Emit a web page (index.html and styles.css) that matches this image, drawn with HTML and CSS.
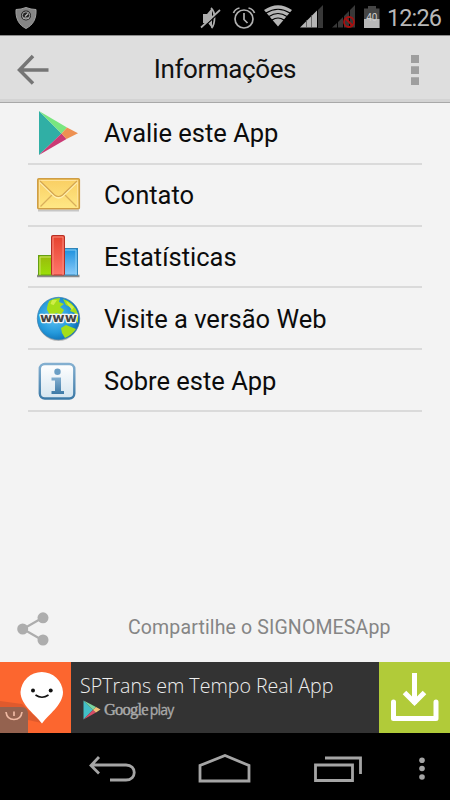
FILE: index.html
```
<!DOCTYPE html>
<html lang="pt-BR">
<head>
    <meta charset="utf-8">
    <meta name="viewport" content="width=device-width, initial-scale=1.0">
    <title>Informações</title>
    <link rel="stylesheet" href="styles.css">
</head>
<body>

<!-- Status bar -->
<div class="status-bar">
    <svg class="shield" width="22" height="22" viewBox="0 0 22 22">
        <path d="M1 2.5Q6 2.5 11 .5Q16 2.5 21 2.5C21.500 12 18 18 11 21.500C4 18 .5 12 1 2.500Z" fill="#858585" stroke="#a0a0a0"/>
        <circle cx="11" cy="8.500" r="5" fill="#222"/>
        <circle cx="11" cy="8.500" r="3.700" fill="none" stroke="#aaa"/>
        <path d="M10 9.500L13 6.500M8 11H14" stroke="#bbb" stroke-width="1.200"/>
    </svg>
    <svg class="mute" width="22" height="24" viewBox="0 0 22 24">
        <path d="M3 8H7L12 2V22L8 17H3Z" fill="#adadad"/>
        <path d="M11 2Q14.500 5 14.500 12T11.500 22" fill="none" stroke="#adadad" stroke-width="1.800"/>
        <path d="M2 22.500L21 5" stroke="#000" stroke-width="1.500"/>
        <path d="M1 21.500L20 4" stroke="#adadad" stroke-width="1.700"/>
    </svg>
    <svg class="alarm" width="24" height="24" viewBox="0 0 24 24">
        <g fill="none" stroke="#b0b0b0" stroke-width="1.700">
            <circle cx="12" cy="13" r="9"/>
            <path d="M12 7V13.500L15.500 17M1.500 7Q3 3 7.500 2M22.500 7Q21 3 16.500 2"/>
        </g>
    </svg>
    <svg class="wifi" width="28" height="22" viewBox="0 0 28 22">
        <path d="M0 5Q14-4.500 28 5L14 21.500Z" fill="#b5b5b5"/>
        <path d="M2 8Q14 .5 26 8M5 11.500Q14 5.500 23 11.500M8 15Q14 11 20 15" fill="none" stroke="#000" stroke-width="1.200"/>
    </svg>
    <svg class="signal" width="24" height="24" viewBox="0 0 24 24">
        <path d="M18 6L23 1V24H18Z" fill="#383838"/>
        <path d="M0 23.500L17 6.500V23.500Z" fill="#b5b5b5"/>
        <path d="M6.500 16V24M11.500 11V24" stroke="#555" stroke-width=".8"/>
    </svg>
    <svg class="signal-off" width="24" height="24" viewBox="0 0 24 24">
        <path d="M0 23.500L5 19V23.500ZM6 18L11 13V23.500H6ZM12 12L17 7V23.500H12ZM18 6L23 1V23.500H18Z" fill="#383838"/>
        <g fill="none" stroke="#a90f0f" stroke-width="1.800">
            <circle cx="17" cy="18" r="5"/>
            <path d="M13.500 14.500L20.500 21.500"/>
        </g>
    </svg>
    <svg class="battery" width="16" height="22" viewBox="0 0 16 22">
        <path d="M0 2.500H4V0H12V2.500H15.500V22H0Z" fill="#454545"/>
        <path d="M0 13H15.500V22H0Z" fill="#b8b8b8"/>
        <text x="7.800" y="14.500" text-anchor="middle">40</text>
    </svg>
    <span class="clock">12:26</span>
</div>

<!-- Title bar -->
<header class="title-bar">
    <svg width="34" height="32" viewBox="0 0 34 32">
        <path d="M17 2L3.500 16L17 29.500M3 16H32.500" fill="none" stroke="#757575" stroke-width="3.500"/>
    </svg>
    <h1>Informações</h1>
    <svg width="8" height="30" viewBox="0 0 8 30">
        <path d="M0 0H8V8H0ZM0 11.300H8V19H0ZM0 22.300H8V30H0Z" fill="#9e9e9e"/>
    </svg>
</header>

<main>
    <ul class="menu">
        <li>
            <svg width="46" height="46" viewBox="0 0 46 46">
                <path d="M3 1V45L25.500 23.500Z" fill="#30afa5"/>
                <path d="M3 1L31 17.500L25.500 23.500Z" fill="#79e67f"/>
                <path d="M3 45L30.500 29L25.500 23.500Z" fill="#cb3974"/>
                <path d="M31 17.500L42 23.300L30.500 29L25.500 23.500Z" fill="#ed9152"/>
            </svg>
            <span>Avalie este App</span>
        </li>
        <li>
            <svg width="46" height="46" viewBox="0 0 46 46">
                <defs>
                    <linearGradient id="paper" x2="0" y2="1"><stop stop-color="#f9ce62"/><stop offset="1" stop-color="#ffe886"/></linearGradient>
                </defs>
                <path d="M2 38.500H43" stroke="#c6c6c6" stroke-width="2"/>
                <rect x="1.800" y="6.800" width="41.500" height="30" rx="1" fill="url(#paper)" stroke="#cf9d45" stroke-width="1.600"/>
                <path d="M3.500 35V8.500H41.500V35" fill="none" stroke="#ffe39a"/>
                <path d="M4.500 34.500L16 23M40.500 34.500L29 23" stroke="#d9ae5a" stroke-width="1.300"/>
                <path d="M4 10.500L18.500 24.500Q22.500 27.500 26.500 24.500L41 10.500" fill="none" stroke="#fff1b5" stroke-width="1.300"/>
                <path d="M4 9L18.500 23Q22.500 26 26.500 23L41 9" fill="none" stroke="#d4a651" stroke-width="1.200"/>
            </svg>
            <span>Contato</span>
        </li>
        <li>
            <svg width="46" height="46" viewBox="0 0 46 46">
                <defs>
                    <linearGradient id="green" x2="0" y2="1"><stop stop-color="#9aba0b"/><stop offset="1" stop-color="#9bdf09"/></linearGradient>
                    <linearGradient id="red" x2="0" y2="1"><stop stop-color="#e6412c"/><stop offset="1" stop-color="#ff766b"/></linearGradient>
                    <linearGradient id="blue" x2="0" y2="1"><stop stop-color="#198fdd"/><stop offset="1" stop-color="#8acbfa"/></linearGradient>
                </defs>
                <path d="M1 42H43.500" stroke="#8b8b8b" stroke-width="2.500"/>
                <rect x="2.500" y="21.500" width="13" height="19.500" fill="url(#green)" stroke="#649f13"/>
                <path d="M4 41V23H15" fill="none" stroke="#c8e56b"/>
                <rect x="28" y="14.500" width="13.500" height="26.500" fill="url(#blue)" stroke="#2f84b8"/>
                <path d="M29 16H40V41" fill="none" stroke="#8cd0f2"/>
                <rect x="15.500" y="1.500" width="13" height="39.500" rx="1" fill="url(#red)" stroke="#b52f25"/>
                <path d="M17 41V3H27V41" fill="none" stroke="#f88b7c"/>
            </svg>
            <span>Estatísticas</span>
        </li>
        <li>
            <svg width="46" height="46" viewBox="0 0 46 46">
                <defs>
                    <radialGradient id="sea" cx=".4" cy=".45" r=".65"><stop stop-color="#62c7f5"/><stop offset=".6" stop-color="#2499db"/><stop offset="1" stop-color="#0867ac"/></radialGradient>
                </defs>
                <circle cx="22.500" cy="24" r="21" fill="#bbb"/>
                <circle cx="22.500" cy="22.500" r="21.200" fill="url(#sea)" stroke="#397eae" stroke-width=".7"/>
                <path d="M13 5Q18 2 24 2L23 6L28 8L24 11L28 14L25 19L20 17L17 19L24 24L23 27L14 20L11 13ZM27 3Q38 6 42 18L42 27L38 22L39 17L34 15L36 12L30 9ZM25 32L30 29L40 33Q36 39 29 42L26 37Z" fill="#a4de19"/>
                <path d="M16 4L21 4L17 10L13 12ZM30 5L38 11L36 14L32 9Z" fill="#d0ee47"/>
                <path d="M12 7L20 10L17 16L24 21L17 20L11 14Z" fill="#a4de19"/>
                <text class="www" transform="translate(22.500 26) scale(1 .82)" text-anchor="middle" textLength="37" lengthAdjust="spacingAndGlyphs">www</text>
            </svg>
            <span>Visite a versão Web</span>
        </li>
        <li>
            <svg width="46" height="46" viewBox="0 0 46 46">
                <defs>
                    <linearGradient id="tile" x2="0" y2="1"><stop stop-color="#fff"/><stop offset="1" stop-color="#d5e5ef"/></linearGradient>
                    <linearGradient id="rim" x2="0" y2="1"><stop stop-color="#83afd0"/><stop offset="1" stop-color="#3d7aa7"/></linearGradient>
                </defs>
                <rect x="3.800" y="6" width="34.500" height="34.500" rx="5" fill="url(#tile)" stroke="url(#rim)" stroke-width="2.400"/>
                <circle cx="21.500" cy="13.800" r="3.200" fill="#6b9fc5"/>
                <path d="M15.500 19.500H25V33H28V36H15.500V33H19V22.500H15.500Z" fill="url(#rim)"/>
            </svg>
            <span>Sobre este App</span>
        </li>
    </ul>
</main>

<!-- Share row -->
<footer class="share">
    <svg width="32" height="34" viewBox="0 0 32 34">
        <path d="M26 5.500L6 17L26 28.500" fill="none" stroke="#adadad" stroke-width="2.200"/>
        <g fill="#adadad">
            <circle cx="26" cy="5.800" r="5.500"/>
            <circle cx="5.700" cy="17" r="5.500"/>
            <circle cx="26" cy="28" r="5.500"/>
        </g>
    </svg>
    <span>Compartilhe o SIGNOMESApp</span>
</footer>

<!-- Ad banner -->
<div class="ad">
    <svg class="ad-logo" width="71" height="71" viewBox="0 0 71 71">
        <path d="M0 39L22 42L42 61L28 58L0 45Z" fill="#df5a2d"/>
        <path d="M0 45H21Q28 45 28 52V71H0Z" fill="#94624f"/>
        <path d="M6 50Q7 57.500 14 57.500T22 50M14 49.500V54" fill="none" stroke="#efb9a3" stroke-width="1.700"/>
        <path d="M42 61.500C36 53 20.500 43 20.500 30A21.300 21.500 0 0 1 63 30C63 43 48 53 42 61.500Z" fill="#fff"/>
        <circle cx="33" cy="28.500" r="2" fill="#111"/>
        <circle cx="50.700" cy="28.500" r="2" fill="#111"/>
        <path d="M35.500 33Q42 37.500 48.500 33" fill="none" stroke="#111" stroke-width="1.600"/>
    </svg>
    <div class="ad-text">
        <p>SPTrans em Tempo Real App</p>
        <div class="store">
            <svg width="18" height="20" viewBox="0 0 18 20">
                <path d="M.5.5V19.500L10 10Z" fill="#42bfc7"/>
                <path d="M.5.5L13 7L10 10Z" fill="#7bd6a0"/>
                <path d="M.5 19.500L13 12.500L10 10Z" fill="#d64e67"/>
                <path d="M13 7L17.500 9.500L13 12.500L10 10Z" fill="#f2c078"/>
            </svg>
            <span class="google">Google</span>
            <span class="play">play</span>
        </div>
    </div>
    <div class="download">
        <svg width="50" height="50" viewBox="0 0 50 50">
            <path d="M24.500 0V31M14.500 19.500L24.500 29.500L34.500 19.500" fill="none" stroke="#fff" stroke-width="5"/>
            <path d="M3.500 29V45.500H46V29" fill="none" stroke="#fff" stroke-width="5" stroke-linecap="round" stroke-linejoin="round"/>
        </svg>
    </div>
</div>

<!-- Navigation bar -->
<nav class="nav-bar">
    <svg class="back" width="48" height="28" viewBox="0 0 48 28">
        <path d="M11 2L3 10.500L11 18.500M3 10H38C49 10 49 25 38 25H22" fill="none" stroke="#a5a5a5" stroke-width="2.800"/>
    </svg>
    <svg class="home" width="54" height="30" viewBox="0 0 54 30">
        <path d="M2 27V11.500L27 1.500L51 11.500V27Z" fill="none" stroke="#a5a5a5" stroke-width="2.800"/>
    </svg>
    <svg class="recent" width="50" height="28" viewBox="0 0 50 28">
        <path d="M12 3H47.500V19M2.500 10H39.500V25.500H2.500Z" fill="none" stroke="#a5a5a5" stroke-width="2.800"/>
    </svg>
    <svg class="more" width="6" height="24" viewBox="0 0 6 24">
        <g fill="#a5a5a5">
            <circle cx="3" cy="3.300" r="2.800"/>
            <circle cx="3" cy="11.500" r="2.800"/>
            <circle cx="3" cy="20" r="2.800"/>
        </g>
    </svg>
</nav>

</body>
</html>
```
FILE: styles.css
```
* {
    box-sizing: border-box;
}

body {
    margin: 0;
    width: 450px;
    height: 800px;
    display: flex;
    flex-direction: column;
    background: #f3f3f3;
    font-family: Roboto, "Liberation Sans", sans-serif;
    overflow: hidden;
}

svg {
    display: block;
    flex-shrink: 0;
}

/* Status bar */
.status-bar {
    display: flex;
    height: 35px;
    padding: 5px 0 0 15px;
    background: #000;
}

.shield {
    margin: 2px 163px 0 0;
}

.mute {
    margin: 1px 10px 0 0;
}

.alarm {
    margin: 1px 8px 0 0;
}

.wifi {
    margin-right: 8px;
}

.signal {
    margin: -1px 8px 0 0;
}

.signal-off {
    margin: -1px 8px 0 0;
}

.battery {
    margin: 1px 7px 0 0;
}

.battery text {
    font-size: 10px;
    fill: #ccc;
}

.clock {
    color: #b8b8b8;
    font-size: 23.5px;
    line-height: 27px;
    letter-spacing: -0.9px;
}

/* Title bar */
.title-bar {
    display: flex;
    align-items: center;
    justify-content: space-between;
    height: 68px;
    padding: 1px 31px 0 16px;
    background: #dedede;
    border-top: 1px solid #8c8c8c;
    border-bottom: 1px solid #a8a8a8;
    box-shadow: inset 0 -3px #d3d3d3;
}

.title-bar h1 {
    margin: 0 11px 2px 0;
    color: #111;
    font-size: 26px;
    font-weight: normal;
    letter-spacing: -0.4px;
}

/* Menu */
main {
    flex: 1;
    padding: 0 28px;
}

.menu {
    margin: 0;
    padding: 0;
    list-style: none;
}

.menu li {
    display: flex;
    align-items: center;
    gap: 22px;
    height: 61.8px;
    padding: 1px 0 0 8px;
    border-bottom: 2px solid #dadada;
    color: #0c0c0c;
    font-size: 25.5px;
}

.www {
    font: bold 15px "DejaVu Sans", sans-serif;
    fill: #444;
    stroke: #f5f5f5;
    stroke-width: 3px;
    stroke-linejoin: round;
    paint-order: stroke;
}

/* Share row */
.share {
    display: flex;
    align-items: center;
    height: 66px;
    padding-left: 17px;
    color: #858585;
    font-size: 19.5px;
    letter-spacing: 0.14px;
}

.share span {
    margin: 0 0 3px 79px;
}

/* Ad banner */
.ad {
    display: flex;
    height: 71px;
    background: #333;
}

.ad-logo {
    background: #fc662f;
}

.ad-text {
    flex: 1;
    padding: 10px 0 0 9px;
    color: #eee;
    font-family: "Open Sans", sans-serif;
    font-weight: 300;
}

.ad-text p {
    margin: 0;
    font-size: 19.6px;
    line-height: 28px;
    white-space: nowrap;
}

.store {
    display: flex;
    align-items: center;
    padding: 0 0 0 3px;
    color: #aaa;
    line-height: 20px;
}

.google {
    margin: 0 2px 0 3px;
    font-family: "Liberation Serif", serif;
    font-size: 16.5px;
    font-weight: 400;
    letter-spacing: -0.8px;
    -webkit-text-stroke: 0.4px #aaa;
}

.play {
    font-size: 14px;
    font-weight: 400;
    letter-spacing: -0.8px;
    -webkit-text-stroke: 0.3px #aaa;
}

.download {
    width: 71px;
    padding: 11px 0 0 11px;
    background: #b1cb39;
}

/* Navigation bar */
.nav-bar {
    display: flex;
    height: 67px;
    padding: 22px 0 0 88px;
    background: #000;
}

.back {
    margin-right: 62px;
}

.home {
    margin: -1px 61px 0 0;
}

.recent {
    margin-right: 56px;
}

.more {
    margin-top: 2px;
}
```
